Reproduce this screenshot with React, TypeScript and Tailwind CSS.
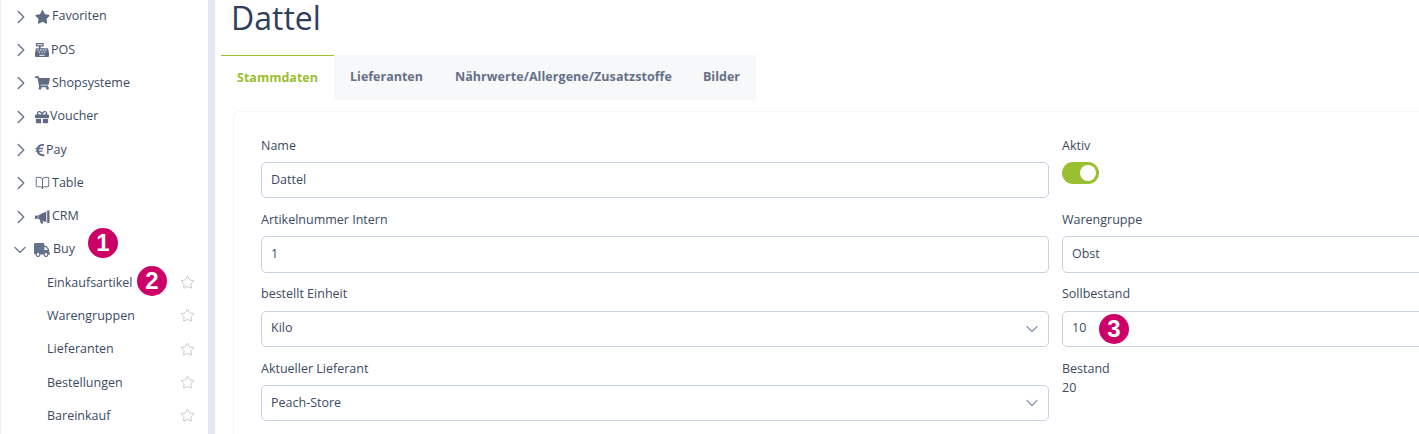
import { ChevronRight, ChevronDown, BookOpen, Star } from "lucide-react";
import { FaStar, FaCashRegister, FaShoppingCart, FaGift, FaEuroSign, FaTruck } from "react-icons/fa";
import type { ReactNode } from "react";

const font = { fontFamily: '"Open Sans", "Noto Sans", sans-serif' };

function Badge({ n, cls }: { n: number; cls: string }) {
  return (
    <span
      className={`absolute flex h-[30px] w-[30px] items-center justify-center rounded-full bg-[#cc0066] text-[24px] font-bold leading-none text-white ${cls}`}
      style={{ fontFamily: '"Liberation Sans", sans-serif' }}
    >
      {n}
    </span>
  );
}

function Megaphone() {
  return (
    <svg viewBox="0 0 16 14" className="h-[14px] w-[16px]" fill="currentColor">
      <path d="M0 5.5h3v3.5H0z" />
      <path d="M3.5 5 12 1v11.5L3.5 9z" />
      <path d="M13 0h2.4v13.5H13z" />
      <path d="M5 9.6l3.2 1.2.8 3.2H6.2z" />
    </svg>
  );
}

const top: [string, ReactNode, string][] = [
  ["Favoriten", <FaStar className="h-[14px] w-[15px]" />, "ml-[2px]"],
  ["POS", <FaCashRegister className="h-[14px] w-[14px]" />, "ml-[1px]"],
  ["Shopsysteme", <FaShoppingCart className="h-[14px] w-[15px]" />, "ml-[2px]"],
  ["Voucher", <FaGift className="h-[14px] w-[14px]" />, "ml-0"],
  ["Pay", <FaEuroSign className="h-[14px] w-[10px]" />, "ml-[-4px]"],
  ["Table", <BookOpen className="h-[16px] w-[16px]" strokeWidth={1.5} />, "ml-[2px]"],
  ["CRM", <Megaphone />, "ml-[2px]"],
];

function TopRow({ label, icon, gap }: { label: string; icon: ReactNode; gap: string }) {
  return (
    <div className="flex h-[33.3px] items-center pl-[9px] text-[12.5px] text-[#3b4a63]">
      <ChevronRight className="h-[22px] w-[22px] text-[#6d7891]" strokeWidth={1.6} />
      <span className="ml-[3px] flex w-[15px] justify-start text-[#5f6b85]">{icon}</span>
      <span className={gap}>{label}</span>
    </div>
  );
}

function SubRow({ label, badge }: { label: string; badge?: boolean }) {
  return (
    <div className="relative flex h-[33.3px] items-center pl-[46px] pr-[13px] text-[12.5px] text-[#3b4a63]">
      <span>{label}</span>
      {badge && <Badge n={2} cls="left-[136px] top-[-1px]" />}
      <Star className="ml-auto -mt-[1px] h-[15px] w-[15px] text-[#c9c9c9]" strokeWidth={1.6} />
    </div>
  );
}

function Field({ label, value, select, children }: { label: string; value: string; select?: boolean; children?: ReactNode }) {
  return (
    <div className="h-[74.3px]">
      <div className="h-[25.2px] text-[12.5px] leading-[17px] text-[#3b4a63]">{label}</div>
      <div className="relative flex h-[36.5px] items-center rounded-[5px] border border-[#c9d2e3] bg-white pl-[9px] pr-[6px] text-[12.5px] text-[#3b4a63]">
        <span>{value}</span>
        {children}
        {select && <ChevronDown className="ml-auto h-[20px] w-[20px] text-[#8e98ad]" strokeWidth={1.5} />}
      </div>
    </div>
  );
}

export default function App() {
  return (
    <div className="flex h-[434px] w-[1419px] overflow-hidden bg-white" style={font}>
      <aside className="h-full w-[208px] shrink-0 border-l border-[#edf0f6] bg-white pt-[0.15px]">
        {top.map(([l, i, g]) => (
          <TopRow key={l} label={l} icon={i} gap={g} />
        ))}
        <div className="relative flex h-[33.3px] items-center pl-[9px] text-[12.5px] text-[#3b4a63]">
          <ChevronDown className="h-[20px] w-[20px] text-[#6d7891]" strokeWidth={1.6} />
          <FaTruck preserveAspectRatio="none" className="ml-[4px] h-[14px] w-[16px] text-[#66728c]" />
          <span className="ml-[3px]">Buy</span>
          <Badge n={1} cls="left-[87px] top-[-5px]" />
        </div>
        <SubRow label="Einkaufsartikel" badge />
        <SubRow label="Warengruppen" />
        <SubRow label="Lieferanten" />
        <SubRow label="Bestellungen" />
        <SubRow label="Bareinkauf" />
      </aside>
      <div className="h-full w-[7px] shrink-0 bg-[#e4e8f2]" />
      <main className="min-w-0 flex-1 pl-[6px]">
        <h1 className="h-[55px] pl-[10px] text-[32px] leading-[36px] text-[#2f3e5a]">Dattel</h1>
        <div className="flex h-[45px] w-[535px] items-stretch bg-[#f7f8fa] text-[12.5px] font-bold text-[#667087]">
          <div className="flex w-[113px] items-center justify-center border-t border-[#9bbf2f] bg-white text-[#9bbf2f]">Stammdaten</div>
          <div className="flex items-center pl-[16px]">Lieferanten</div>
          <div className="flex items-center pl-[32px] tracking-[0.06px]">Nährwerte/Allergene/Zusatzstoffe</div>
          <div className="flex items-center pl-[31px]">Bilder</div>
        </div>
        <div className="ml-[12px] mt-[11px] h-[400px] rounded-l-[6px] border-l border-t border-[#f4f5f8] pl-[27px] pt-[24.8px]">
          <div className="grid grid-cols-[788px_400px] gap-x-[13px]">
            <div>
              <Field label="Name" value="Dattel" />
              <Field label="Artikelnummer Intern" value="1" />
              <Field label="bestellt Einheit" value="Kilo" select />
              <Field label="Aktueller Lieferant" value="Peach-Store" select />
            </div>
            <div>
              <div className="h-[74.3px]">
                <div className="h-[25.2px] text-[12.5px] leading-[17px] text-[#3b4a63]">Aktiv</div>
                <div className="flex h-[22px] w-[37px] items-center justify-end rounded-full bg-[#99c030] pr-[3px]">
                  <span className="h-[16px] w-[16px] rounded-full bg-white" />
                </div>
              </div>
              <Field label="Warengruppe" value="Obst" />
              <Field label="Sollbestand" value="10">
                <Badge n={3} cls="left-[36px] top-[2px]" />
              </Field>
              <div className="text-[12.5px] leading-[17px] text-[#3b4a63]">
                <div className="mb-[2px]">Bestand</div>
                <div>20</div>
              </div>
            </div>
          </div>
        </div>
      </main>
    </div>
  );
}
